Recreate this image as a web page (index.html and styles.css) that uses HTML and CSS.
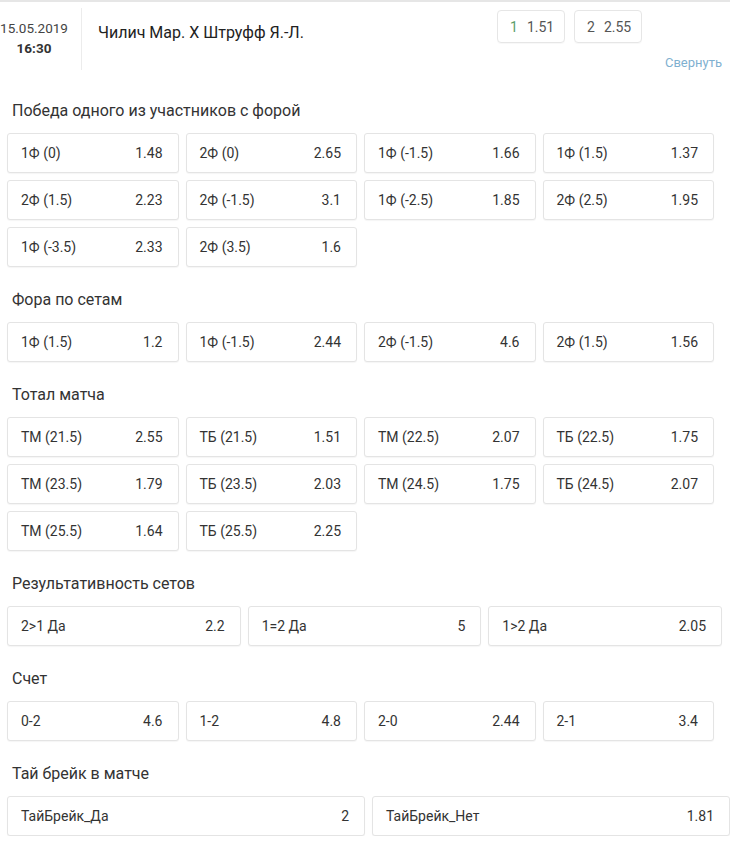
FILE: index.html
```html
<!DOCTYPE html>
<html lang="ru">
<head>
<meta charset="utf-8">
<title>Чилич Мар. Х Штруфф Я.-Л.</title>
<link rel="stylesheet" href="styles.css">
</head>
<body>
<div class="header">
  <div class="date">
    <div class="d">15.05.2019</div>
    <div class="t">16:30</div>
  </div>
  <div class="match">Чилич Мар. Х Штруфф Я.-Л.</div>
  <div class="right">
    <div class="odds">
      <div class="odd"><span class="n green">1</span><span>1.51</span></div>
      <div class="odd"><span class="n">2</span><span>2.55</span></div>
    </div>
    <div class="collapse">Свернуть</div>
  </div>
</div>

<div class="section">
  <div class="title">Победа одного из участников с форой</div>
  <div class="grid g4">
    <div class="cell"><span>1Ф (0)</span><span>1.48</span></div>
    <div class="cell"><span>2Ф (0)</span><span>2.65</span></div>
    <div class="cell"><span>1Ф (-1.5)</span><span>1.66</span></div>
    <div class="cell"><span>1Ф (1.5)</span><span>1.37</span></div>
    <div class="cell"><span>2Ф (1.5)</span><span>2.23</span></div>
    <div class="cell"><span>2Ф (-1.5)</span><span>3.1</span></div>
    <div class="cell"><span>1Ф (-2.5)</span><span>1.85</span></div>
    <div class="cell"><span>2Ф (2.5)</span><span>1.95</span></div>
    <div class="cell"><span>1Ф (-3.5)</span><span>2.33</span></div>
    <div class="cell"><span>2Ф (3.5)</span><span>1.6</span></div>
  </div>
</div>

<div class="section">
  <div class="title">Фора по сетам</div>
  <div class="grid g4">
    <div class="cell"><span>1Ф (1.5)</span><span>1.2</span></div>
    <div class="cell"><span>1Ф (-1.5)</span><span>2.44</span></div>
    <div class="cell"><span>2Ф (-1.5)</span><span>4.6</span></div>
    <div class="cell"><span>2Ф (1.5)</span><span>1.56</span></div>
  </div>
</div>

<div class="section">
  <div class="title">Тотал матча</div>
  <div class="grid g4">
    <div class="cell"><span>ТМ (21.5)</span><span>2.55</span></div>
    <div class="cell"><span>ТБ (21.5)</span><span>1.51</span></div>
    <div class="cell"><span>ТМ (22.5)</span><span>2.07</span></div>
    <div class="cell"><span>ТБ (22.5)</span><span>1.75</span></div>
    <div class="cell"><span>ТМ (23.5)</span><span>1.79</span></div>
    <div class="cell"><span>ТБ (23.5)</span><span>2.03</span></div>
    <div class="cell"><span>ТМ (24.5)</span><span>1.75</span></div>
    <div class="cell"><span>ТБ (24.5)</span><span>2.07</span></div>
    <div class="cell"><span>ТМ (25.5)</span><span>1.64</span></div>
    <div class="cell"><span>ТБ (25.5)</span><span>2.25</span></div>
  </div>
</div>

<div class="section">
  <div class="title">Результативность сетов</div>
  <div class="grid g3">
    <div class="cell"><span>2&gt;1 Да</span><span>2.2</span></div>
    <div class="cell"><span>1=2 Да</span><span>5</span></div>
    <div class="cell"><span>1&gt;2 Да</span><span>2.05</span></div>
  </div>
</div>

<div class="section">
  <div class="title">Счет</div>
  <div class="grid g4">
    <div class="cell"><span>0-2</span><span>4.6</span></div>
    <div class="cell"><span>1-2</span><span>4.8</span></div>
    <div class="cell"><span>2-0</span><span>2.44</span></div>
    <div class="cell"><span>2-1</span><span>3.4</span></div>
  </div>
</div>

<div class="section">
  <div class="title">Тай брейк в матче</div>
  <div class="grid g2">
    <div class="cell"><span>ТайБрейк_Да</span><span>2</span></div>
    <div class="cell"><span>ТайБрейк_Нет</span><span>1.81</span></div>
  </div>
</div>
</body>
</html>
```

FILE: styles.css
```css
html, body {
  margin: 0;
  padding: 0;
  background: #fff;
}
body {
  font-family: Roboto, "Liberation Sans", Arial, sans-serif;
  color: #333;
  width: 730px;
  overflow: hidden;
}
.header {
  display: flex;
  align-items: flex-start;
  height: 76px;
  border-top: 2px solid #e6e6e6;
}
.date {
  width: 70px;
  height: 62px;
  margin-top: 6px;
  margin-left: -1px;
  padding-right: 12px;
  border-right: 1px solid #ececec;
  text-align: center;
  font-size: 13.5px;
  box-sizing: content-box;
}
.date .d {
  padding-top: 12px;
  line-height: 16px;
  color: #444;
}
.date .t {
  margin-top: 3px;
  line-height: 18px;
  font-weight: bold;
  color: #333;
}
.match {
  margin-left: 16px;
  margin-top: 21px;
  font-size: 16px;
  line-height: 20px;
  color: #222;
}
.right {
  margin-left: auto;
  padding-right: 8px;
  padding-top: 8px;
  display: flex;
  flex-direction: column;
  align-items: flex-end;
}
.odds {
  display: flex;
  gap: 9px;
  margin-right: 80px;
}
.odd {
  width: 68px;
  height: 33px;
  box-sizing: border-box;
  padding: 0 12px;
  border: 1px solid #e6e6e6;
  border-radius: 4px;
  display: flex;
  align-items: center;
  gap: 9px;
  font-size: 14px;
  color: #555;
  box-shadow: 0 1px 1px rgba(0,0,0,0.03);
}
.odd .n {
  color: #555;
}
.odd .green {
  color: #5c9e6a;
}
.collapse {
  margin-top: 12px;
  line-height: 16px;
  font-size: 13px;
  color: #7fb0d0;
}
.section .title {
  margin-top: 23px;
  padding-left: 12px;
  font-size: 16px;
  line-height: 20px;
  color: #333;
}
.grid {
  display: grid;
  gap: 7px;
  margin-top: 12px;
  margin-left: 7px;
}
.g4 {
  width: 707px;
  grid-template-columns: repeat(4, 1fr);
}
.g3 {
  width: 715px;
  grid-template-columns: repeat(3, 1fr);
}
.g2 {
  width: 723px;
  grid-template-columns: repeat(2, 1fr);
}
.cell {
  height: 40px;
  box-sizing: border-box;
  border: 1px solid #e4e4e4;
  border-radius: 3px;
  box-shadow: 0 1px 1px rgba(0,0,0,0.04);
  display: flex;
  justify-content: space-between;
  align-items: center;
  padding: 0 15px 0 13px;
  font-size: 14px;
  color: #333;
  background: #fff;
}
```
